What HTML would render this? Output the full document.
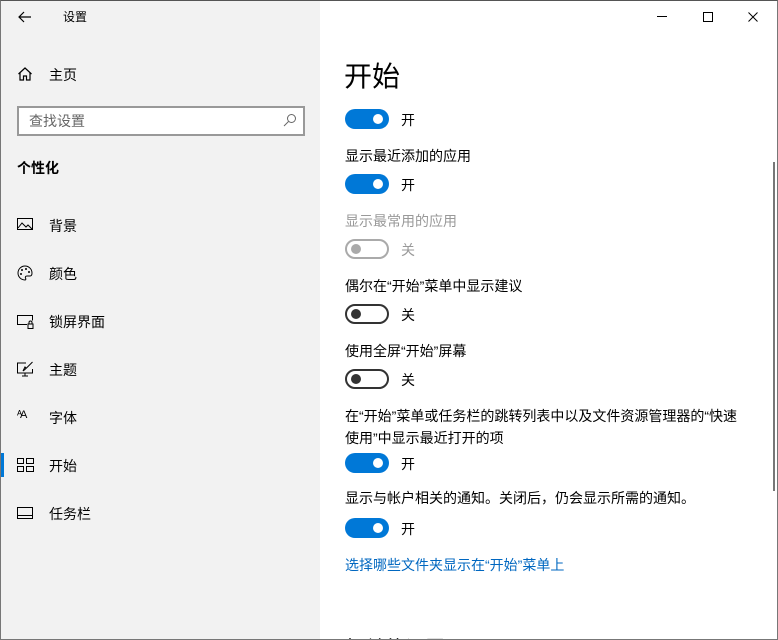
<!DOCTYPE html><html><head><meta charset="utf-8"><style>
*{margin:0;padding:0;box-sizing:border-box}
html{width:778px;height:640px;overflow:hidden}
body{width:778px;height:640px;overflow:hidden;font-family:"Liberation Sans","Noto Sans CJK SC",sans-serif;font-size:14px;color:#000;position:relative;background:#fff}
.l{position:absolute;left:0;top:0;width:320px;height:640px;background:#f2f2f2}
.a{position:absolute;white-space:nowrap}
.t{position:absolute;left:345px;width:44px;height:20px;border-radius:10px}
.on{background:#0078d7}
.on:after{content:"";position:absolute;right:6px;top:5px;width:10px;height:10px;border-radius:50%;background:#fff}
.off{border:2px solid #333}
.off:after{content:"";position:absolute;left:4px;top:3px;width:10px;height:10px;border-radius:50%;background:#333}
.dis{border:2px solid #aaa}
.dis:after{content:"";position:absolute;left:4px;top:3px;width:10px;height:10px;border-radius:50%;background:#aaa}
.s{left:401px}
.ic{position:absolute;left:17px}
</style></head><body>
<div class="l"></div>
<div style="position:absolute;left:345px;top:632px;font-size:20px;white-space:nowrap">相关的设置</div>
<div style="position:absolute;left:0;top:0;width:778px;height:640px;border:1px solid #777;border-top-color:#555;pointer-events:none;z-index:5"></div>
<svg class="a" style="left:17px;top:9px" width="16" height="16" viewBox="0 0 16 16"><path d="M14 8H2M7 3L2 8l5 5" stroke="#000" stroke-width="1.2" fill="none"/></svg>
<div class="a" style="left:63px;top:8px;font-size:12px">设置</div>
<svg class="ic" style="top:66px" width="16" height="16" viewBox="0 0 16 16"><path d="M1.5 8L8 2l6.5 6M3 7v7h3.5v-4h3v4H13V7" stroke="#000" stroke-width="1.2" fill="none"/></svg>
<div class="a" style="left:49px;top:65px">主页</div>
<div class="a" style="left:17px;top:106px;width:288px;height:30px;border:2px solid #999;background:#fff"></div>
<div class="a" style="left:29px;top:111px;color:#666">查找设置</div>
<svg class="a" style="left:283px;top:113px" width="14" height="14" viewBox="0 0 14 14"><circle cx="8.5" cy="5.5" r="4" stroke="#666" fill="none"/><path d="M5.5 8.5L1 13" stroke="#666"/></svg>
<div class="a" style="left:17px;top:158px;font-weight:bold">个性化</div>
<svg class="ic" style="top:218px" width="16" height="14" viewBox="0 0 16 14"><rect x=".5" y=".5" width="15" height="11" stroke="#000" fill="none"/><path d="M1 10l4-5 4 4 2-2 4 4" stroke="#000" fill="none"/></svg>
<div class="a" style="left:49px;top:216px">背景</div>
<svg class="ic" style="top:265px" width="16" height="16" viewBox="0 0 16 16"><path d="M8 1a7 7 0 1 0 0 14c1 0 1-1 .5-2s0-2 1.5-2h3c1.5 0 2-1 2-3A7 7 0 0 0 8 1z" stroke="#000" fill="none"/><circle cx="5" cy="5" r="1"/><circle cx="9" cy="4" r="1"/><circle cx="12" cy="7" r="1"/><circle cx="4" cy="9" r="1"/></svg>
<div class="a" style="left:49px;top:264px">颜色</div>
<svg class="ic" style="top:314px" width="17" height="15" viewBox="0 0 17 15"><path d="M10 10.5H.5v-9h15v5" stroke="#000" fill="none"/><rect x="11" y="10" width="5" height="4.5" stroke="#000" fill="none"/><path d="M12 10V8.5a1.5 1.5 0 0 1 3 0V10" stroke="#000" fill="none"/></svg>
<div class="a" style="left:49px;top:312px">锁屏界面</div>
<svg class="ic" style="top:361px" width="17" height="16" viewBox="0 0 17 16"><path d="M9 2H.5v10h15V8M8 12v3M5 15h6" stroke="#000" fill="none"/><path d="M15.5 1L9 7.5M6 10l2-1.5 1-1.5-1-1z" stroke="#000" fill="none"/></svg>
<div class="a" style="left:49px;top:360px">主题</div>
<div class="a" style="left:17px;top:409px;font-size:11px;letter-spacing:-2px">ᴬA</div>
<div class="a" style="left:49px;top:408px">字体</div>
<div class="a" style="left:0;top:453px;width:4px;height:24px;background:#0078d7"></div>
<svg class="ic" style="top:458px" width="17" height="14" viewBox="0 0 17 14"><rect x=".5" y=".5" width="6" height="5" stroke="#000" fill="none"/><rect x="9.5" y=".5" width="7" height="5" stroke="#000" fill="none"/><rect x=".5" y="8.5" width="6" height="5" stroke="#000" fill="none"/><rect x="9.5" y="8.5" width="7" height="5" stroke="#000" fill="none"/></svg>
<div class="a" style="left:49px;top:456px">开始</div>
<svg class="ic" style="top:507px" width="16" height="12" viewBox="0 0 16 12"><rect x=".5" y=".5" width="15" height="11" stroke="#000" fill="none"/><path d="M1 8.5h14" stroke="#000"/></svg>
<div class="a" style="left:49px;top:504px">任务栏</div>

<svg class="a" style="left:657px;top:16px" width="10" height="2"><rect width="10" height="1"/></svg>
<svg class="a" style="left:703px;top:12px" width="11" height="11"><rect x=".5" y=".5" width="9" height="9" stroke="#000" fill="none"/></svg>
<svg class="a" style="left:748px;top:12px" width="11" height="11"><path d="M.5.5l9 9M9.5.5l-9 9" stroke="#000"/></svg>
<div class="a" style="left:773px;top:162px;width:2px;height:329px;background:#777"></div>

<div class="a" style="left:344px;top:55px;font-size:28px">开始</div>
<div class="t on" style="top:109px"></div><div class="a s" style="top:110px">开</div>
<div class="a" style="left:345px;top:146px">显示最近添加的应用</div>
<div class="t on" style="top:174px"></div><div class="a s" style="top:175px">开</div>
<div class="a" style="left:345px;top:211px;color:#999">显示最常用的应用</div>
<div class="t dis" style="top:239px"></div><div class="a s" style="top:240px;color:#999">关</div>
<div class="a" style="left:345px;top:276px">偶尔在“开始”菜单中显示建议</div>
<div class="t off" style="top:304px"></div><div class="a s" style="top:305px">关</div>
<div class="a" style="left:345px;top:341px">使用全屏“开始”屏幕</div>
<div class="t off" style="top:369px"></div><div class="a s" style="top:370px">关</div>
<div class="a" style="left:345px;top:406px">在“开始”菜单或任务栏的跳转列表中以及文件资源管理器的“快速</div>
<div class="a" style="left:345px;top:428px">使用”中显示最近打开的项</div>
<div class="t on" style="top:453px"></div><div class="a s" style="top:454px">开</div>
<div class="a" style="left:345px;top:488px">显示与帐户相关的通知。关闭后，仍会显示所需的通知。</div>
<div class="t on" style="top:518px"></div><div class="a s" style="top:519px">开</div>
<div class="a" style="left:345px;top:555px;color:#0067c0">选择哪些文件夹显示在“开始”菜单上</div>
</body></html>
